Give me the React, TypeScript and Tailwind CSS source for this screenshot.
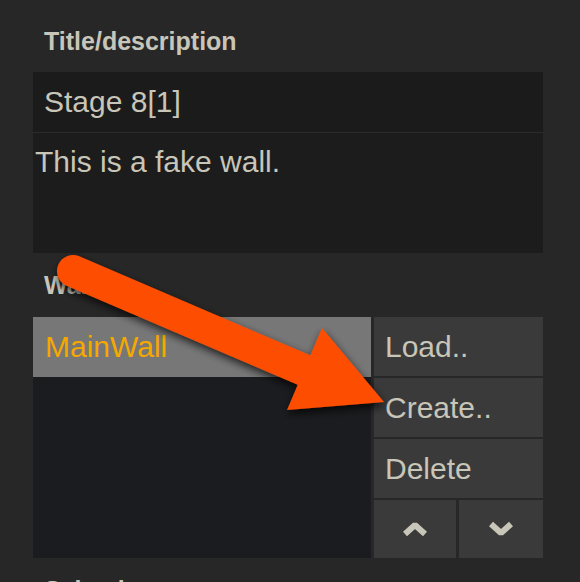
import React from 'react';

const font = { fontFamily: '"Liberation Sans", Arial, sans-serif' };

function Chevron({ down }: { down?: boolean }) {
  return (
    <svg width="24" height="16" viewBox="0 0 24 16" className="block">
      <path
        d={down ? 'M2 3 L12 12 L22 3' : 'M2 13 L12 4 L22 13'}
        fill="none"
        stroke="#c8c5b9"
        strokeWidth="6"
        strokeLinejoin="bevel"
      />
    </svg>
  );
}

function SideButton({ label }: { label: string }) {
  return (
    <button className="h-[59px] w-full bg-[#3a3a3a] pl-[11px] text-left text-[30px] leading-[59px] text-[#c8c5b9]">
      {label}
    </button>
  );
}

function Arrow() {
  return (
    <svg
      className="pointer-events-none absolute left-0 top-0"
      width="580"
      height="582"
      viewBox="0 0 580 582"
    >
      <defs>
        <filter id="shadow" x="-20%" y="-20%" width="140%" height="140%">
          <feDropShadow dx="1" dy="4" stdDeviation="4" floodColor="#000" floodOpacity="0.75" />
        </filter>
      </defs>
      <g filter="url(#shadow)" fill="#fc4e02">
        <line x1="73" y1="271" x2="304" y2="370" stroke="#fc4e02" strokeWidth="32" strokeLinecap="round" />
        <polygon points="322,328 384,402 287,410" />
      </g>
    </svg>
  );
}

export default function App() {
  return (
    <div className="relative h-[582px] w-[580px] overflow-hidden bg-[#272727]" style={font}>
      <div className="pl-[33px] pr-[37px] pt-[27px]">
        <div className="mb-[17px] h-[28px] pl-[11px] text-[25px] font-bold leading-[28px] text-[#c8c5b9]">
          Title/description
        </div>
        <div className="h-[60px] bg-[#1b1b1b] pl-[11px] text-[30px] leading-[60px] text-[#c8c5b9]">
          Stage 8[1]
        </div>
        <div className="h-[121px] border-t border-[#2c2c2c] bg-[#1c1c1c] pl-[2px] pt-[12px] text-[30px] leading-[34px] text-[#c8c5b9]">
          This is a fake wall.
        </div>

        <div className="my-[18px] h-[28px] pl-[11px] text-[25px] font-bold leading-[28px] text-[#c8c5b9]">
          Walls
        </div>
        <div className="flex h-[241px] gap-[3px]">
          <div className="w-[338px] bg-[#1b1c1f]">
            <div className="h-[60px] bg-[#777777] pl-[12px] text-[30px] leading-[60px] text-[#f5a800]">
              MainWall
            </div>
          </div>
          <div className="flex w-[169px] flex-col gap-[2px]">
            <SideButton label="Load.." />
            <SideButton label="Create.." />
            <SideButton label="Delete" />
            <div className="flex flex-1 gap-[3px]">
              <button className="flex w-[82px] items-center justify-center bg-[#3a3a3a]">
                <Chevron />
              </button>
              <button className="flex flex-1 items-center justify-center bg-[#3a3a3a]">
                <Chevron down />
              </button>
            </div>
          </div>
        </div>

        <div className="mt-[18px] h-[28px] pl-[11px] text-[25px] font-bold leading-[28px] text-[#c8c5b9]">
          Selection
        </div>
      </div>
      <Arrow />
    </div>
  );
}
